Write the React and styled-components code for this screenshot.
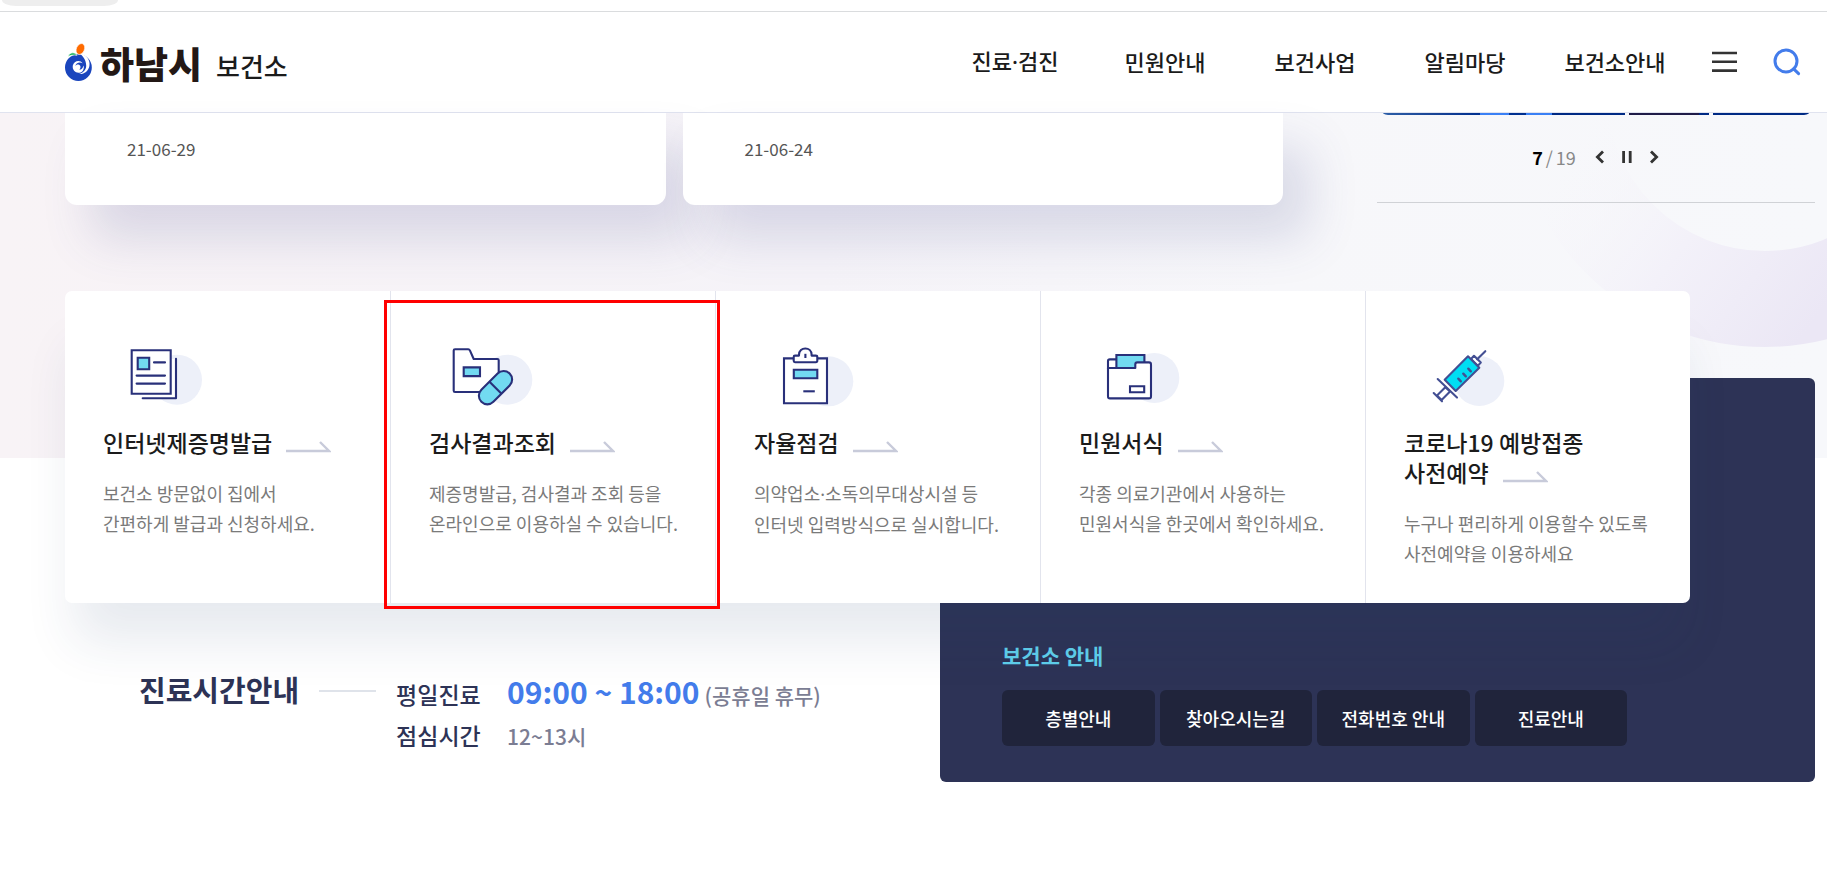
import React from 'react';
import styled, { createGlobalStyle } from 'styled-components';

const GlobalStyle = createGlobalStyle`
  :root {
    --navy: #2d3356;
    --ink: #1b1b1b;
    --blue: #437ceb;
    --sky: #72daf1;
    --line: #e2e4ed;
  }
  * {
    box-sizing: border-box;
  }
  body {
    margin: 0;
    background: #fff;
    color: var(--ink);
    font-family: 'Noto Sans CJK KR', 'Noto Sans', sans-serif;
    word-break: keep-all;
  }
  a {
    color: inherit;
    text-decoration: none;
  }
  h1, h2, h3, p, dl, dd {
    margin: 0;
    font-weight: inherit;
  }
  button {
    border: 0;
    padding: 0;
    background: none;
    cursor: pointer;
  }
  svg {
    display: block;
  }
`;

const StyledTopStrip = styled.div`
  height: 12px;
  padding-left: 2px;
  border-bottom: 1px solid #dadcde;
`;

const StyledTab = styled.div`
  width: 116px;
  height: 6px;
  background: #eeeeee;
  border-radius: 0 0 14px 14px / 0 0 6px 6px;
`;

const StyledHeader = styled.header`
  display: flex;
  align-items: center;
  justify-content: space-between;
  height: 101px;
  padding: 0 13px 0 65px;
  border-bottom: 1px solid #e0e3ef;
  background: #fff;
`;

const StyledLogo = styled.a`
  display: flex;
  align-items: flex-end;
  height: 38px;
`;

const StyledCity = styled.strong`
  width: 116px;
  margin-left: 7px;
  color: #231815;
  font-size: 37px;
  font-weight: 900;
  line-height: 36px;
`;

const StyledCenterName = styled.span`
  font-size: 26px;
  font-weight: 500;
  line-height: 30px;
`;

const StyledNav = styled.nav`
  display: flex;
  align-items: center;
`;

const StyledNavLink = styled.a`
  width: 150px;
  padding-bottom: 3px;
  text-align: center;
  font-size: 22px;
  font-weight: 500;
  line-height: 32px;
`;

const StyledDot = styled.span`
  font-family: 'Noto Sans', sans-serif;
`;

const StyledIconButton = styled.button`
  display: flex;
  justify-content: center;
  width: ${({ $wide }) => ($wide ? '70px' : '54px')};
`;

const StyledMain = styled.main`
  position: relative;
  padding: 0 12px 90px 65px;
  background: linear-gradient(90deg, #f8f3f6 0%, #f5f3f8 45%, #f7f7fa 70%, #f7f8fb 100%) no-repeat;
  background-size: 100% 345px;
`;

const StyledRing = styled.svg`
  position: absolute;
  top: 0;
  right: 0;
`;

const StyledTopRow = styled.div`
  position: relative;
  display: grid;
  grid-template-columns: 1218fr 438fr;
  column-gap: 94px;
`;

const StyledNotices = styled.div`
  display: grid;
  grid-template-columns: 1fr 1fr;
  column-gap: 17px;
`;

const StyledNotice = styled.article`
  height: 92px;
  padding: 20px 62px;
  background: #fff;
  border-radius: 0 0 12px 12px;
  box-shadow: 26px 34px 48px rgba(71, 79, 145, 0.17);
  color: #555;
  font-size: 17px;
  line-height: 32px;
`;

const StyledSlider = styled.section`
  height: 90px;
  border-bottom: 1px solid #d0d2d6;
`;

const StyledBanner = styled.div`
  display: grid;
  grid-template-columns: 243fr 80fr 96fr;
  column-gap: 4px;
  height: 2px;
  margin: 0 6px;
  border-radius: 0 0 8px 8px / 0 0 2px 2px;
  overflow: hidden;
`;

const StyledSlide = styled.span`
  background: ${({ $fill }) => $fill};
`;

const StyledPager = styled.div`
  display: flex;
  align-items: center;
  justify-content: center;
  gap: 3px;
  margin-top: 26px;
  color: #888;
  font-size: 18px;
  line-height: 32px;
`;

const StyledCurrent = styled.strong`
  color: #000;
  font-weight: 700;
`;

const StyledPagerButtons = styled.span`
  display: flex;
  align-items: center;
  gap: 15px;
  margin-left: 15px;
`;

const StyledQuickList = styled.ul`
  position: relative;
  z-index: 1;
  display: grid;
  grid-template-columns: repeat(5, 1fr);
  margin: 86px 125px 0 0;
  padding: 0;
  list-style: none;
  background: #fff;
  border-radius: 7px;
  box-shadow: 0 48px 48px -10px rgba(40, 66, 110, 0.11);
`;

const StyledQuickItem = styled.li`
  position: relative;
  min-height: 312px;
  padding: 54px 20px 33px 38px;
  & + & {
    border-left: 1px solid var(--line);
  }
  ${({ $marked }) =>
    $marked &&
    `
    &::after {
      content: '';
      position: absolute;
      inset: 9px -5px -6px -7px;
      border: 3px solid #f00;
      z-index: 2;
      pointer-events: none;
    }
  `}
`;

const StyledQuickTitle = styled.h2`
  margin-top: 17px;
  font-size: 23px;
  font-weight: 500;
  line-height: 30px;
  white-space: pre-line;
  svg {
    display: inline-block;
    margin-left: 14px;
    vertical-align: -1px;
  }
`;

const StyledQuickText = styled.p`
  margin-top: 21px;
  color: #7a7a7a;
  font-size: 18px;
  line-height: 30px;
  white-space: nowrap;
`;

const StyledLine = styled.span`
  display: block;
`;

const StyledInfo = styled.section`
  display: grid;
  grid-template-columns: 1fr 1fr;
  margin-top: -225px;
`;

const StyledHours = styled.div`
  display: flex;
  align-items: flex-start;
  padding: 291px 0 0 74px;
  color: var(--navy);
`;

const StyledHoursTitle = styled.h2`
  display: flex;
  align-items: center;
  font-size: 29px;
  font-weight: 700;
  line-height: 40px;
  white-space: nowrap;
  &::after {
    content: '';
    width: 57px;
    height: 2px;
    margin: 4px 20px 0;
    background: #dfe3ea;
  }
`;

const StyledHoursList = styled.dl`
  display: grid;
  grid-template-columns: 111px auto;
  grid-auto-rows: 41px;
  align-items: baseline;
  padding-top: 5px;
  font-size: 23px;
  font-weight: 500;
  line-height: 41px;
  white-space: nowrap;
`;

const StyledHoursValue = styled.dd`
  color: #7b7d93;
  font-size: 21px;
`;

const StyledTime = styled.strong`
  margin-right: 5px;
  color: var(--blue);
  font-size: 30px;
  font-weight: 700;
  line-height: 30px;
`;

const StyledGuide = styled.div`
  min-height: 404px;
  padding: 262px 188px 36px 62px;
  background: var(--navy);
  border-radius: 6px;
`;

const StyledGuideTitle = styled.h2`
  color: #5fd0ec;
  font-size: 21px;
  font-weight: 700;
  line-height: 30px;
`;

const StyledGuideLinks = styled.div`
  display: grid;
  grid-template-columns: repeat(4, 1fr);
  gap: 5px;
  margin-top: 20px;
`;

const StyledGuideLink = styled.a`
  height: 56px;
  border-radius: 6px;
  background: #20243b;
  color: #fff;
  text-align: center;
  font-size: 18px;
  font-weight: 500;
  line-height: 56px;
  white-space: nowrap;
`;

const Symbol = () => (
  <svg width="28" height="38" viewBox="0 0 28 38" aria-hidden="true">
    <circle cx="13.4" cy="24.6" r="13.4" fill="#1a45bd" />
    <path d="M14 10.2C21.5 11.4 25.6 17 24.4 23C23.4 28.4 18.6 31.6 14 31C18.6 29.6 21.4 26.4 21.2 22.4C21 17.4 18.4 12.8 14 10.2Z" fill="#fff" />
    <path d="M17.6 20.2C15 16.4 8.8 17.6 7.8 22.6C7 27.6 11.4 31 15.6 29.4C18.6 28 19.4 24.6 18.4 22.4C18 25 16.4 26.8 14.2 26.6C16 25.4 16 22.8 14.2 21.8C12.8 21 11 21.6 10.4 23C10.4 20.4 14.4 18.4 17.6 20.2Z" fill="#fff" />
    <ellipse cx="15.4" cy="6" rx="4" ry="5.7" transform="rotate(24 15.4 6)" fill="#ff6b00" stroke="#fff" strokeWidth="0.6" />
    <path d="M3 13.4C4.6 9.2 9.8 8.6 12 12.4C8.8 11.8 6 12 3 13.4Z" fill="#19b35a" stroke="#fff" strokeWidth="0.6" />
  </svg>
);

const Arrow = () => (
  <svg width="45" height="12" viewBox="0 0 45 12" fill="none" stroke="#c8cbda" strokeWidth="2.4" aria-hidden="true">
    <path d="M0 10H43L34 1" />
  </svg>
);

const Glyph = ({ cx, cy, children }) => (
  <svg width="110" height="65" viewBox="1 0 110 65" fill="none" stroke="#29307a" strokeWidth="2.1" strokeLinejoin="round" aria-hidden="true">
    <circle cx={cx} cy={cy} r="25" fill="#edf0f9" stroke="none" />
    {children}
  </svg>
);

const DocumentIcon = () => (
  <Glyph cx="75" cy="34.7">
    <path d="M74 13.7V53.3H40.7V40L68 14Z" fill="#fff" stroke="none" />
    <path d="M74 13.7V53.3H40.7" strokeLinecap="round" />
    <path d="M29.7 5.3H68.7V48.7H29.7Z" fill="#fff" strokeLinejoin="miter" />
    <path d="M35.7 12.7H47.2V24.2H35.7Z" fill="#72daf1" strokeLinejoin="miter" />
    <path d="M52 17.4H63M34.6 30.6H63M34.6 38.6H63" strokeLinecap="round" />
  </Glyph>
);

const ResultIcon = () => (
  <Glyph cx="79.3" cy="34.7">
    <path d="M27 47Q25.7 47 25.7 45.7V5.6Q25.7 4.3 27 4.3H40.2Q41.4 4.3 42 5.6L45.7 14H69.4Q70.7 14 70.7 15.3V47Z" fill="#fff" stroke="none" />
    <path d="M52 47H27Q25.7 47 25.7 45.7V5.6Q25.7 4.3 27 4.3H40.2Q41.4 4.3 42 5.6L45.7 14H69.4Q70.7 14 70.7 15.3V28" />
    <path d="M35.7 22.4H52V31.1H35.7Z" fill="#72daf1" strokeLinejoin="miter" />
    <g transform="rotate(-45 67.5 42.7)">
      <rect x="47.5" y="34.2" width="40" height="17" rx="8.5" fill="#72daf1" />
      <path d="M67.5 34.2V51.2" />
    </g>
  </Glyph>
);

const ClipboardIcon = () => (
  <Glyph cx="75.3" cy="36.3">
    <path d="M31 13.4H74V58.2H31Z" fill="#fff" strokeLinejoin="miter" />
    <path d="M42 10.6H46V9.8C46 1.4 58.6 1.4 58.6 9.8V10.6H62.8Q64.3 10.6 64.3 12V15.8Q64.3 17.2 62.8 17.2H42Q40.7 17.2 40.7 15.8V12Q40.7 10.6 42 10.6Z" fill="#fff" />
    <path d="M52.4 8.8V13" />
    <path d="M40.8 24.8H64.3V33.2H40.8Z" fill="#72daf1" strokeLinejoin="miter" />
    <path d="M50.3 46.3H61.8" />
  </Glyph>
);

const FolderIcon = () => (
  <Glyph cx="76.3" cy="33">
    <path d="M30 24V16Q30 14.4 31.8 14.4H40V24Z" fill="#fff" />
    <path d="M38.4 10H66.4V23H38.4Z" fill="#72daf1" strokeLinejoin="miter" />
    <path d="M30 23H57.3V19.4Q57.3 17.4 59.3 17.4H71Q73 17.4 73 19.4V51.4Q73 53.4 71 53.4H32Q30 53.4 30 51.4Z" fill="#fff" />
    <path d="M52 41.2H66.2V47.2H52Z" strokeLinejoin="miter" />
  </Glyph>
);

const SyringeIcon = () => (
  <Glyph cx="76.3" cy="36">
    <g stroke="#434f93">
      <path d="M42.3 42.3L34 50.5L38.6 55L47 46.6Z" fill="#fff" />
      <path d="M30.7 48L39 56.3M34.7 34L54 52.6" strokeLinecap="round" />
      <path d="M68 14L71 10.8L77.8 17.6L74.8 20.8Z" fill="#fff" />
      <path d="M74.2 14.2L82.3 6.2" strokeLinecap="round" />
      <path d="M41.7 34.7L65 11.3L76.3 22.7L52.7 46Z" fill="#00def3" />
      <path d="M55.3 33.7L57.8 36.3M60.3 28.7L62.8 31.3M65.3 23.7L67.8 26.3" strokeLinecap="round" strokeWidth="2.4" />
    </g>
  </Glyph>
);

const menu = ['진료·검진', '민원안내', '보건사업', '알림마당', '보건소안내'];

const slides = [
  'linear-gradient(90deg, #2d5fa8 0, #1a4596 20%, #003090 40%, #3a80f5 40%, #3a80f5 52%, #003090 52%, #003090 59%, #3a80f5 59%, #3a80f5 70%, #002a84 70%)',
  'linear-gradient(90deg, #201c48 88%, #002a84 88%)',
  '#002a84',
];

const quickItems = [
  { icon: DocumentIcon, title: '인터넷제증명발급', lines: ['보건소 방문없이 집에서', '간편하게 발급과 신청하세요.'] },
  { icon: ResultIcon, title: '검사결과조회', lines: ['제증명발급, 검사결과 조회 등을', '온라인으로 이용하실 수 있습니다.'], marked: true },
  { icon: ClipboardIcon, title: '자율점검', lines: ['의약업소·소독의무대상시설 등', '인터넷 입력방식으로 실시합니다.'] },
  { icon: FolderIcon, title: '민원서식', lines: ['각종 의료기관에서 사용하는', '민원서식을 한곳에서 확인하세요.'] },
  { icon: SyringeIcon, title: '코로나19 예방접종\n사전예약', lines: ['누구나 편리하게 이용할수 있도록', '사전예약을 이용하세요'] },
];

const guides = ['층별안내', '찾아오시는길', '전화번호 안내', '진료안내'];

// the middle dot of the Korean font is a wide one, so it takes the Latin font
const Dotted = ({ children }) =>
  children.split('·').map((part, index) => (
    <React.Fragment key={part}>
      {index > 0 && <StyledDot>·</StyledDot>}
      {part}
    </React.Fragment>
  ));

const Header = () => (
  <StyledHeader>
    <StyledLogo href="#home">
      <Symbol />
      <StyledCity>하남시</StyledCity>
      <StyledCenterName>보건소</StyledCenterName>
    </StyledLogo>
    <StyledNav>
      {menu.map((item) => (
        <StyledNavLink key={item} href="#menu">
          <Dotted>{item}</Dotted>
        </StyledNavLink>
      ))}
      <StyledIconButton $wide type="button" aria-label="전체메뉴">
        <svg width="26" height="22" viewBox="0 0 26 22" stroke="#333" strokeWidth="2.6">
          <path d="M0 2H25M0 10.8H25M0 19.6H25" />
        </svg>
      </StyledIconButton>
      <StyledIconButton type="button" aria-label="검색">
        <svg width="28" height="28" viewBox="0 0 28 28" fill="none" stroke="#437ceb" strokeWidth="3" strokeLinecap="round">
          <circle cx="13" cy="13" r="11" />
          <path d="M20.6 20.8L25.6 25.6" />
        </svg>
      </StyledIconButton>
    </StyledNav>
  </StyledHeader>
);

const Pager = () => (
  <StyledPager>
    <StyledCurrent>7</StyledCurrent>
    <span>/</span>
    <span>19</span>
    <StyledPagerButtons>
      <button type="button" aria-label="이전">
        <svg width="12" height="14" viewBox="0 0 12 14" fill="none" stroke="#333" strokeWidth="2.8">
          <path d="M9 1.4L3.4 7L9 12.6" />
        </svg>
      </button>
      <button type="button" aria-label="정지">
        <svg width="12" height="14" viewBox="0 0 12 14" stroke="#333" strokeWidth="2.8">
          <path d="M2.6 1V13M9.2 1V13" />
        </svg>
      </button>
      <button type="button" aria-label="다음">
        <svg width="12" height="14" viewBox="0 0 12 14" fill="none" stroke="#333" strokeWidth="2.8">
          <path d="M3 1.4L8.6 7L3 12.6" />
        </svg>
      </button>
    </StyledPagerButtons>
  </StyledPager>
);

const App = () => (
  <>
    <GlobalStyle />
    <StyledTopStrip>
      <StyledTab />
    </StyledTopStrip>
    <Header />
    <StyledMain>
      <StyledRing width="327" height="345" viewBox="0 0 327 345" aria-hidden="true">
        <defs>
          <linearGradient id="ring" gradientUnits="userSpaceOnUse" x1="50" y1="60" x2="290" y2="240">
            <stop offset="0" stopColor="#f7f7fa" stopOpacity="0" />
            <stop offset="0.5" stopColor="#f3f1f9" />
            <stop offset="1" stopColor="#ebe7f5" />
          </linearGradient>
        </defs>
        <circle cx="265" cy="-20" r="206" fill="none" stroke="url(#ring)" strokeWidth="96" />
      </StyledRing>
      <StyledTopRow>
        <StyledNotices>
          <StyledNotice>
            <time dateTime="2021-06-29">21-06-29</time>
          </StyledNotice>
          <StyledNotice>
            <time dateTime="2021-06-24">21-06-24</time>
          </StyledNotice>
        </StyledNotices>
        <StyledSlider>
          <StyledBanner>
            {slides.map((fill) => (
              <StyledSlide key={fill} $fill={fill} />
            ))}
          </StyledBanner>
          <Pager />
        </StyledSlider>
      </StyledTopRow>
      <StyledQuickList>
        {quickItems.map(({ icon: Icon, title, lines, marked }) => (
          <StyledQuickItem key={title} $marked={marked}>
            <a href="#quick">
              <Icon />
              <StyledQuickTitle>
                {title}
                <Arrow />
              </StyledQuickTitle>
              <StyledQuickText>
                {lines.map((line) => (
                  <StyledLine key={line}>
                    <Dotted>{line}</Dotted>
                  </StyledLine>
                ))}
              </StyledQuickText>
            </a>
          </StyledQuickItem>
        ))}
      </StyledQuickList>
      <StyledInfo>
        <StyledHours>
          <StyledHoursTitle>진료시간안내</StyledHoursTitle>
          <StyledHoursList>
            <dt>평일진료</dt>
            <StyledHoursValue>
              <StyledTime>09:00 ~ 18:00</StyledTime>
              (공휴일 휴무)
            </StyledHoursValue>
            <dt>점심시간</dt>
            <StyledHoursValue>12~13시</StyledHoursValue>
          </StyledHoursList>
        </StyledHours>
        <StyledGuide>
          <StyledGuideTitle>보건소 안내</StyledGuideTitle>
          <StyledGuideLinks>
            {guides.map((guide) => (
              <StyledGuideLink key={guide} href="#guide">
                {guide}
              </StyledGuideLink>
            ))}
          </StyledGuideLinks>
        </StyledGuide>
      </StyledInfo>
    </StyledMain>
  </>
);

export default App;
